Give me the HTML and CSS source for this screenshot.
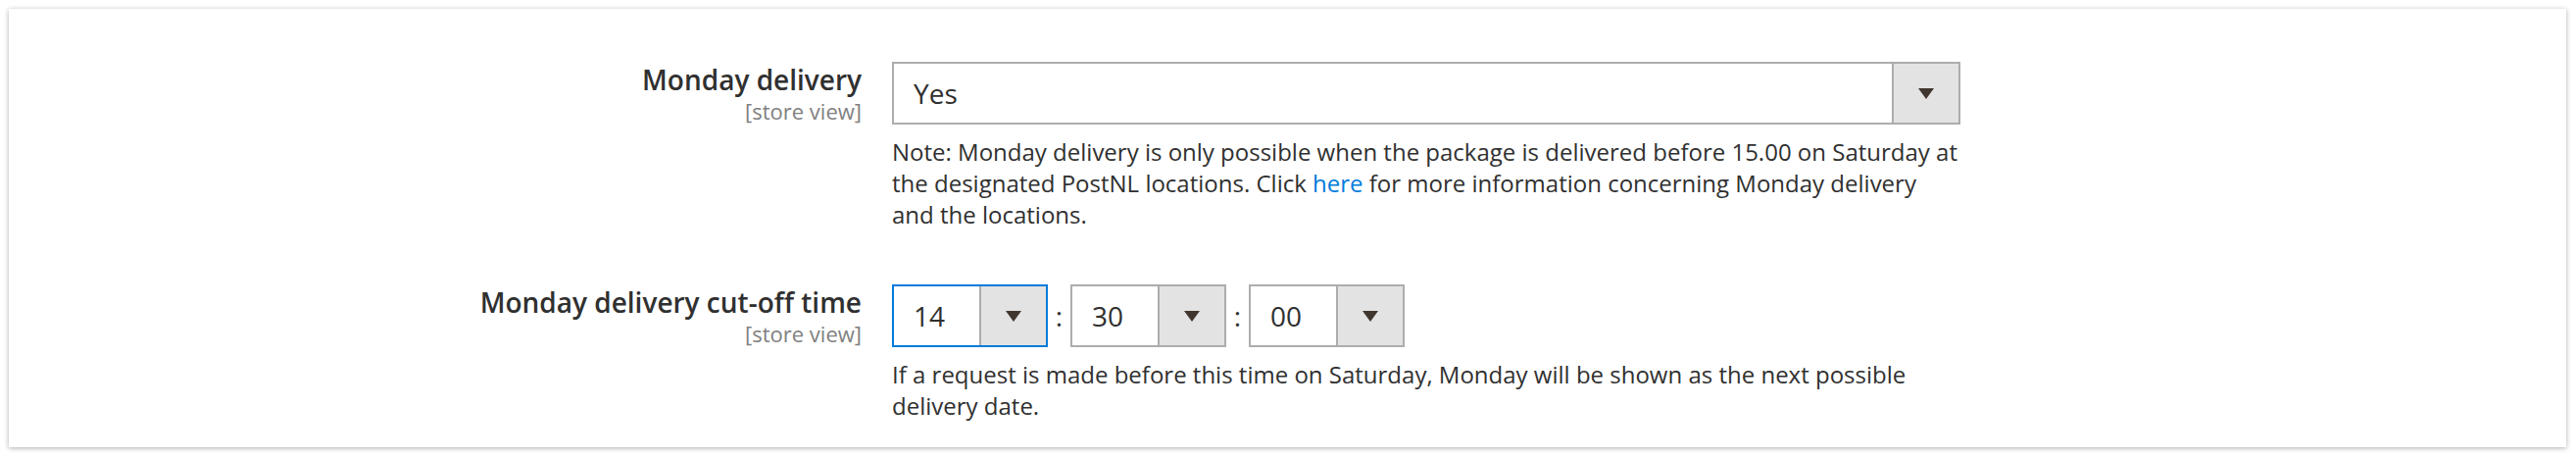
FILE: index.html
```html
<!DOCTYPE html>
<html lang="en">
<head>
<meta charset="utf-8">
<title>PostNL Monday delivery</title>
<link rel="stylesheet" href="styles.css">
</head>
<body>
<div class="panel">
  <div class="row">
    <div class="label">
      <div class="label-title">Monday delivery</div>
      <div class="scope">[store view]</div>
    </div>
    <div class="control">
      <div class="select select-wide">
        <span class="select-value">Yes</span>
        <span class="select-arrow"><span class="tri"></span></span>
      </div>
      <p class="note">Note: Monday delivery is only possible when the package is delivered before 15.00 on Saturday at the designated PostNL locations. Click <a href="#">here</a> for more information concerning Monday delivery and the locations.</p>
    </div>
  </div>
  <div class="row row-second">
    <div class="label">
      <div class="label-title">Monday delivery cut-off time</div>
      <div class="scope">[store view]</div>
    </div>
    <div class="control">
      <div class="time">
        <div class="select select-time focused">
          <span class="select-value">14</span>
          <span class="select-arrow"><span class="tri"></span></span>
        </div>
        <span class="colon">:</span>
        <div class="select select-time">
          <span class="select-value">30</span>
          <span class="select-arrow"><span class="tri"></span></span>
        </div>
        <span class="colon">:</span>
        <div class="select select-time">
          <span class="select-value">00</span>
          <span class="select-arrow"><span class="tri"></span></span>
        </div>
      </div>
      <p class="note">If a request is made before this time on Saturday, Monday will be shown as the next possible delivery date.</p>
    </div>
  </div>
</div>
</body>
</html>
```

FILE: styles.css
```css
html, body {
  margin: 0;
  padding: 0;
  background: #ffffff;
}

body {
  padding: 9px 10px 10px 9px;
  font-family: "Open Sans", "Noto Sans", sans-serif;
  color: #303030;
}

.panel {
  background: #ffffff;
  box-shadow: 0 1px 5px rgba(0, 0, 0, 0.32);
  height: 447px;
  box-sizing: border-box;
  padding-top: 54px;
}

.row {
  display: grid;
  grid-template-columns: 870px 1090px;
  column-gap: 31px;
}

.row-second {
  margin-top: 55px;
}

.label {
  text-align: right;
  padding-top: 0;
}

.label-title {
  font-size: 28px;
  font-weight: 600;
  line-height: 36px;
  color: #303030;
}

.scope {
  font-size: 22px;
  line-height: 28px;
  color: #808080;
}

.select {
  display: flex;
  box-sizing: border-box;
  height: 64px;
  border: 2px solid #adadad;
  background: #ffffff;
}

.select.focused {
  border-color: #007bdb;
}

.select-wide {
  width: 1090px;
}

.select-time {
  width: 159px;
}

.select-value {
  flex: 1;
  display: flex;
  align-items: center;
  padding-left: 20px;
  font-size: 28px;
  color: #303030;
}

.select-arrow {
  width: 66px;
  display: flex;
  align-items: center;
  justify-content: center;
  background: #e3e3e3;
  border-left: 2px solid #adadad;
}

.tri {
  width: 0;
  height: 0;
  border-left: 8.5px solid transparent;
  border-right: 8.5px solid transparent;
  border-top: 11px solid #41362f;
}

.time {
  display: flex;
  align-items: center;
}

.colon {
  width: 23px;
  text-align: center;
  font-size: 28px;
  color: #303030;
}

.note {
  margin: 12px 0 0;
  font-size: 24px;
  line-height: 32px;
  color: #303030;
}

.note a {
  color: #007bdb;
  text-decoration: none;
}
```
